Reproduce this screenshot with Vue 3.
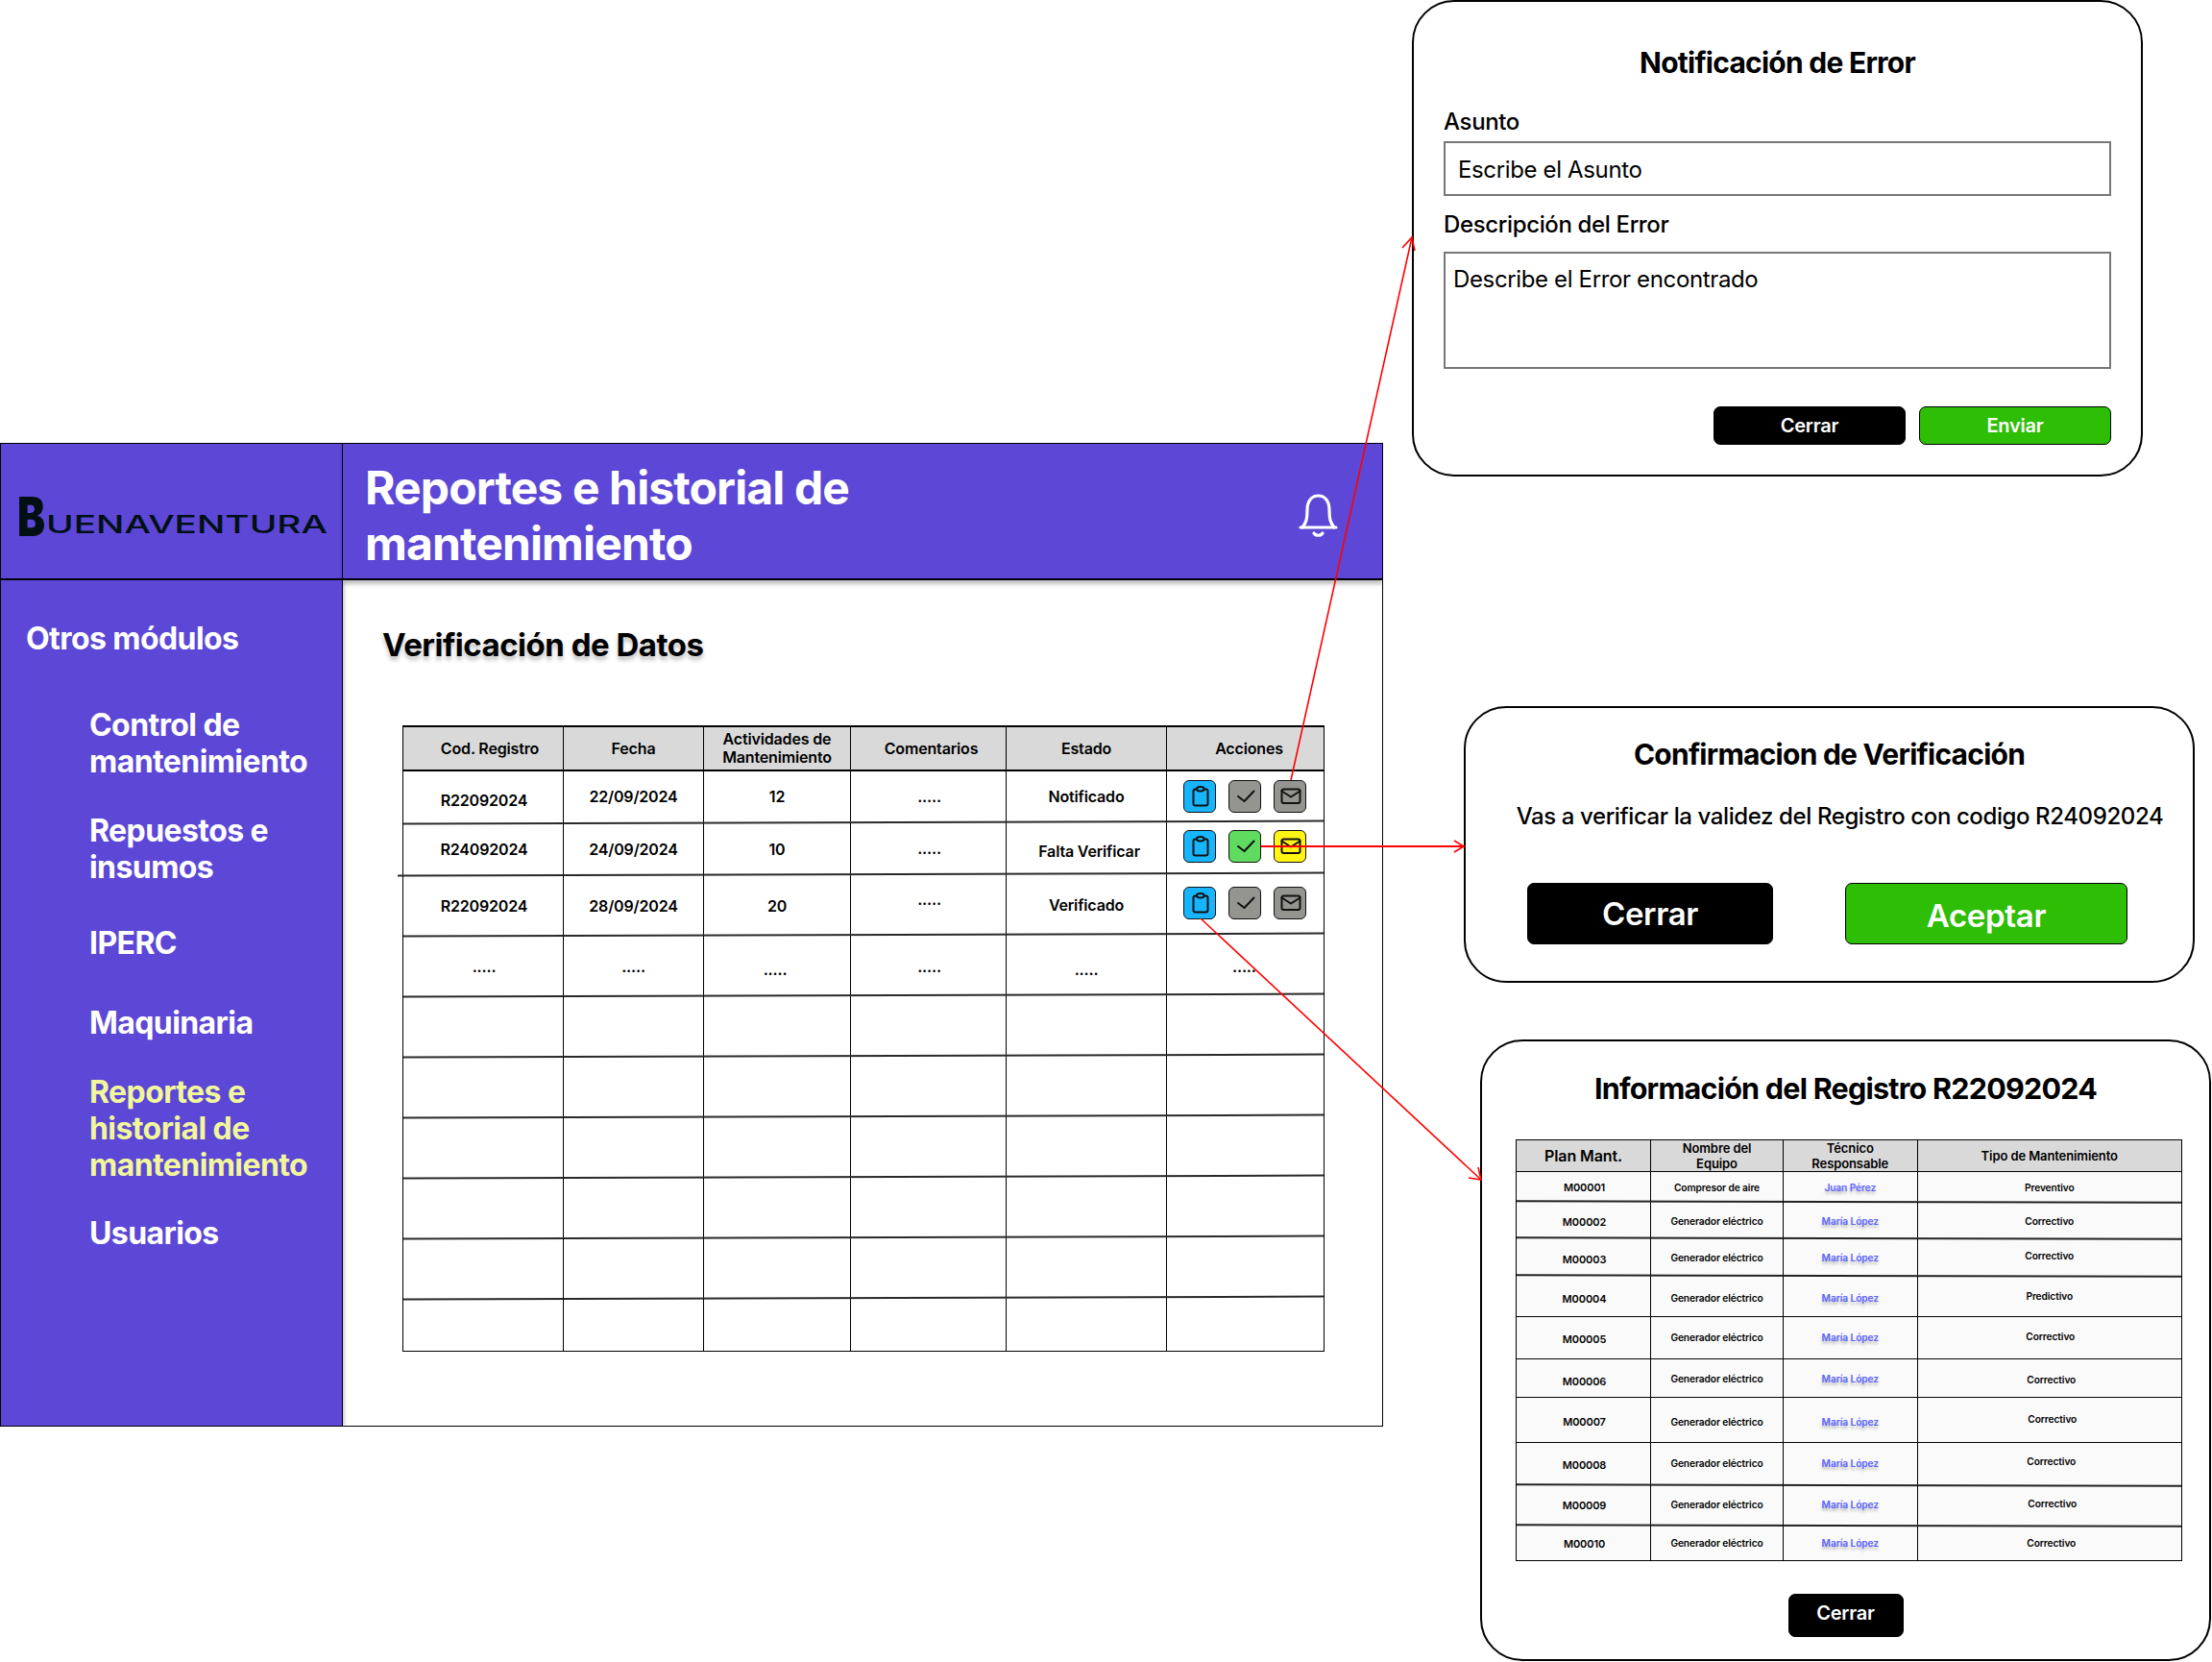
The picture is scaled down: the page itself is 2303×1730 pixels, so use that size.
<template>
  <div class="canvas">
    <section class="frame">
      <div class="logo">
        <svg width="345" height="80" viewBox="0 0 345 80">
          <text x="17" y="66" class="logo-b" textLength="29" lengthAdjust="spacingAndGlyphs">B</text>
          <text x="47" y="63" class="logo-t" textLength="293" lengthAdjust="spacingAndGlyphs">UENAVENTURA</text>
        </svg>
      </div>
      <header class="topbar">
        <h1>Reportes e historial de<br />mantenimiento</h1>
        <svg class="bell" width="42" height="46" viewBox="0 0 42 46" fill="none" stroke="#fff" stroke-width="3.2" stroke-linecap="round" stroke-linejoin="round">
          <path d="M2 35H39" />
          <path d="M4 35C8 30 9 26 9 17C9 7 14 2 20.5 2C27 2 32 7 32 17C32 26 33 30 37 35" />
          <path d="M16 41C18 44 23 44 25 41" />
        </svg>
      </header>

      <nav class="sidebar">
        <div class="side-title">Otros módulos</div>
        <a v-for="item in menu" :key="item.label" class="side-link" :class="{ active: item.active }" :style="{ marginTop: item.gap + 'px' }">{{ item.label }}</a>
      </nav>

      <main class="content">
        <h2>Verificación de Datos</h2>
        <div class="grid-table">
          <div class="row head">
            <div v-for="c in headers" :key="c[0]" class="cell" :style="shift(c[1], c[2])">{{ c[0] }}</div>
          </div>
          <div v-for="(r, i) in rows" :key="i" class="row" :class="{ line: i < rows.length - 1, long: i === 1 }" :style="{ height: r.h + 'px' }">
            <div v-for="(c, j) in r.cells" :key="j" class="cell" :style="shift(c[1], c[2])">{{ c[0] }}</div>
            <div class="cell actions" :style="shift(0, r.btnDy || 0)">
              <template v-if="r.btns">
                <button v-for="b in r.btns" :key="b.kind" class="icon-btn" :class="b.color">
                  <svg width="34" height="34" viewBox="0 0 34 34" fill="none" stroke="#111" stroke-width="2" stroke-linecap="round" stroke-linejoin="round">
                    <template v-if="b.kind === 'clip'">
                      <rect x="10.5" y="9.5" width="15" height="17" rx="2" />
                      <ellipse cx="17.8" cy="9.2" rx="3.8" ry="2.2" fill="#18b5ff" />
                    </template>
                    <path v-else-if="b.kind === 'check'" d="M10 17L16.5 22L26.5 11.5" />
                    <template v-else>
                      <rect x="8.5" y="9.5" width="19" height="14.5" rx="2" />
                      <path d="M8.5 11.5L18 17.5L27.5 11.5" />
                    </template>
                  </svg>
                </button>
              </template>
              <span v-else-if="r.tail" class="tail-dots">.....</span>
            </div>
          </div>
        </div>
      </main>
    </section>

    <section class="modal modal-error">
      <h3>Notificación de Error</h3>
      <label class="field-label first">Asunto</label>
      <div class="input">Escribe el Asunto</div>
      <label class="field-label second">Descripción del Error</label>
      <div class="textarea">Describe el Error encontrado</div>
      <div class="modal-actions">
        <button class="btn black">Cerrar</button>
        <button class="btn green">Enviar</button>
      </div>
    </section>

    <section class="modal modal-confirm">
      <h3>Confirmacion de Verificación</h3>
      <p>Vas a verificar la validez del Registro con codigo R24092024</p>
      <div class="confirm-actions">
        <button class="btn black big close">Cerrar</button>
        <button class="btn green big accept">Aceptar</button>
      </div>
    </section>

    <section class="modal modal-info">
      <h3>Información del Registro R22092024</h3>
      <div class="info-table">
        <div class="info-row info-head">
          <div class="plan">Plan Mant.</div>
          <div>Nombre del<br />Equipo</div>
          <div>Técnico<br />Responsable</div>
          <div>Tipo de Mantenimiento</div>
        </div>
        <div v-for="(r, i) in planRows" :key="r.id" class="info-row" :class="{ slant: i < 3 || i === 7 || i === 8 }" :style="{ height: r.h + 'px' }">
          <div class="code" :style="shift(1, r.dy[0])">{{ r.id }}</div>
          <div :style="shift(0, r.dy[1])">{{ r.equipo }}</div>
          <div class="tech" :style="shift(0, r.dy[2])">{{ r.tecnico }}</div>
          <div :style="shift(r.dx || 0, r.dy[3])">{{ r.tipo }}</div>
        </div>
      </div>
      <button class="btn black info-close">Cerrar</button>
    </section>

    <svg class="links" width="2303" height="1730" viewBox="0 0 2303 1730" fill="none" stroke="#f00" stroke-width="1.6">
      <path d="M1344 812L1470 247" />
      <path d="M1460 258L1470 247L1473 261" />
      <path d="M1313 881H1524" stroke-width="2" />
      <path d="M1514 875L1524 881L1514 887" />
      <path d="M1250 956L1542 1228" />
      <path d="M1529 1226L1542 1228L1539 1215" />
    </svg>
  </div>
</template>

<script setup>
const menu = [
  { label: 'Control de mantenimiento', gap: 52 },
  { label: 'Repuestos e insumos', gap: 35 },
  { label: 'IPERC', gap: 41 },
  { label: 'Maquinaria', gap: 45 },
  { label: 'Reportes e historial de mantenimiento', gap: 35, active: true },
  { label: 'Usuarios', gap: 34 }
]

const headers = [
  ['Cod. Registro', 7, 0],
  ['Fecha', 0, 0],
  ['Actividades de\nMantenimiento', 0, 0],
  ['Comentarios', 3, 0],
  ['Estado', 0, 0],
  ['Acciones', 4, 0]
]

const idle = [
  { kind: 'clip', color: 'blue' },
  { kind: 'check', color: 'gray' },
  { kind: 'mail', color: 'gray' }
]
const pending = [
  { kind: 'clip', color: 'blue' },
  { kind: 'check', color: 'lime' },
  { kind: 'mail', color: 'yellow' }
]

const emptyCells = [['', 0, 0], ['', 0, 0], ['', 0, 0], ['', 0, 0], ['', 0, 0]]
const emptyRow = (h) => ({ h, cells: emptyCells })

const rows = [
  { h: 54, btns: idle, btnDy: -1, cells: [['R22092024', 1, 3], ['22/09/2024', 0, -1], ['12', 0, -1], ['.....', 1, -1], ['Notificado', 0, -1]] },
  { h: 54, btns: pending, btnDy: -3, cells: [['R24092024', 1, 0], ['24/09/2024', 0, 0], ['10', 0, 0], ['.....', 1, -1], ['Falta Verificar', 3, 2]] },
  { h: 63, btns: idle, btnDy: -3, cells: [['R22092024', 1, 0], ['28/09/2024', 0, 0], ['20', 0, 0], ['.....', 1, -7], ['Verificado', 0, -1]] },
  { h: 63, tail: true, cells: [['.....', 1, 0], ['.....', 0, 0], ['.....', -2, 3], ['.....', 1, 0], ['.....', 0, 3]] },
  emptyRow(63),
  emptyRow(63),
  emptyRow(63),
  emptyRow(63),
  emptyRow(63),
  emptyRow(54)
]

const gen = 'Generador eléctrico'
const ml = 'María López'
const planRows = [
  { id: 'M00001', equipo: 'Compresor de aire', tecnico: 'Juan Pérez', tipo: 'Preventivo', h: 31, dy: [1, 1, 1, 1] },
  { id: 'M00002', equipo: gen, tecnico: ml, tipo: 'Correctivo', h: 38, dy: [2, 1, 1, 1] },
  { id: 'M00003', equipo: gen, tecnico: ml, tipo: 'Correctivo', h: 39, dy: [3, 1, 1, -1] },
  { id: 'M00004', equipo: gen, tecnico: ml, tipo: 'Predictivo', h: 43, dy: [3, 2, 2, 0] },
  { id: 'M00005', equipo: gen, tecnico: ml, tipo: 'Correctivo', h: 44, dy: [1, -1, -1, -2], dx: 1 },
  { id: 'M00006', equipo: gen, tecnico: ml, tipo: 'Correctivo', h: 40, dy: [3, 0, 0, 1], dx: 2 },
  { id: 'M00007', equipo: gen, tecnico: ml, tipo: 'Correctivo', h: 47, dy: [2, 2, 2, -1], dx: 3 },
  { id: 'M00008', equipo: gen, tecnico: ml, tipo: 'Correctivo', h: 44, dy: [1, -1, -1, -3], dx: 2 },
  { id: 'M00009', equipo: gen, tecnico: ml, tipo: 'Correctivo', h: 42, dy: [0, -1, -1, -2], dx: 3 },
  { id: 'M00010', equipo: gen, tecnico: ml, tipo: 'Correctivo', h: 36, dy: [1, 0, 0, 0], dx: 2 }
]

// corre el contenido de la celda sin sacarlo del flujo
function shift(dx, dy) {
  return {
    paddingLeft: dx > 0 ? dx * 2 + 'px' : undefined,
    paddingRight: dx < 0 ? -dx * 2 + 'px' : undefined,
    paddingTop: dy > 0 ? dy * 2 + 'px' : undefined,
    paddingBottom: dy < 0 ? -dy * 2 + 'px' : undefined
  }
}
</script>

<style scoped>
.canvas {
  position: relative;
  width: 2303px;
  height: 1730px;
  overflow: hidden;
  background: #fff;
  color: #000;
  font-family: Inter, "Liberation Sans", sans-serif;
}

.frame {
  position: absolute;
  left: 0;
  top: 461px;
  width: 1440px;
  height: 1024px;
  box-sizing: border-box;
  border: 1px solid #000;
  display: grid;
  grid-template-columns: 356px 1fr;
  grid-template-rows: 142px 1fr;
  overflow: hidden;
}

.logo {
  background: #5c47d6;
  border-right: 1px solid #000;
  border-bottom: 2px solid #000;
  display: flex;
  align-items: center;
}

.logo-b {
  font-family: Inter, sans-serif;
  font-size: 56px;
  font-weight: 900;
  fill: #021014;
}

.logo-t {
  font-family: Inter, sans-serif;
  font-size: 25px;
  font-weight: 500;
  fill: #021014;
}

.topbar {
  background: #5c47d6;
  border-bottom: 2px solid #000;
  box-shadow: 0 4px 4px rgba(0, 0, 0, 0.25);
  padding-top: 10px;
  padding-left: 23px;
  padding-right: 45px;
  display: flex;
  align-items: center;
  justify-content: space-between;
  position: relative;
  z-index: 1;
}

.topbar h1 {
  margin: 0;
  color: #fff;
  font-size: 48px;
  line-height: 58px;
  font-weight: 700;
  letter-spacing: -0.018em;
}

.bell {
  margin-top: -1px;
}

.sidebar {
  background: #5c47d6;
  border-right: 1px solid #000;
  box-shadow: 2px 0 3px rgba(0, 0, 0, 0.2);
  padding: 42px 10px 0 26px;
  position: relative;
  z-index: 1;
}

.side-title {
  color: #fff;
  font-size: 32px;
  line-height: 38px;
  font-weight: 700;
  letter-spacing: -0.018em;
}

.side-link {
  display: block;
  color: #fff;
  width: 250px;
  margin-left: 66px;
  font-size: 32px;
  line-height: 37.7px;
  font-weight: 700;
  letter-spacing: -0.018em;
}

.side-link.active {
  color: #f1f79b;
}

.content {
  background: #fff;
  padding-top: 47px;
  padding-left: 41px;
}

.content h2 {
  margin: 0;
  font-size: 33px;
  line-height: 40px;
  font-weight: 700;
  letter-spacing: -0.015em;
  text-shadow: 0 4px 4px rgba(0, 0, 0, 0.25);
}

.grid-table {
  width: 960px;
  margin-top: 64px;
  margin-left: 21px;
  box-sizing: border-box;
  border: 1px solid #000;
  border-top-width: 2px;
  font-size: 16px;
  font-weight: 600;
  letter-spacing: -0.01em;
}

.row {
  display: grid;
  grid-template-columns: 167px 146px 153px 162px 167px 1fr;
  position: relative;
}

.row.head {
  height: 46px;
  box-sizing: border-box;
  background: #d9d9d9;
  border-bottom: 2px solid #000;
  font-size: 16px;
  line-height: 19px;
}

.row.line::after {
  content: "";
  position: absolute;
  left: 0;
  right: 0;
  bottom: 1px;
  height: 1.5px;
  background: #2a2a2a;
  transform: rotate(-0.17deg);
}

.row.long::after {
  left: -6px;
}

.cell {
  display: flex;
  align-items: center;
  justify-content: center;
  box-sizing: border-box;
  border-right: 1px solid #000;
  text-align: center;
  white-space: pre-line;
}

.cell:last-child {
  border-right: 0;
}

.actions {
  justify-content: flex-start;
  gap: 13px;
  padding-left: 17px;
}

.tail-dots {
  margin-left: 51px;
}

.icon-btn {
  width: 34px;
  height: 34px;
  padding: 0;
  box-sizing: border-box;
  border: 1px solid #111;
  border-radius: 6px;
  display: block;
  overflow: hidden;
}

.icon-btn svg {
  display: block;
  margin: -1px;
}

.blue { background: #18b5ff; }
.gray { background: #949490; }
.lime { background: #5fdb5f; }
.yellow { background: #fff515; }

.modal {
  position: absolute;
  box-sizing: border-box;
  border: 2px solid #000;
  border-radius: 44px;
  background: #fff;
}

.modal h3 {
  margin: 0;
  font-size: 30px;
  line-height: 36px;
  font-weight: 700;
  letter-spacing: -0.025em;
  text-align: center;
}

.modal-error {
  left: 1470px;
  top: 0;
  width: 761px;
  height: 496px;
  padding: 45px 31px 0;
}

.field-label {
  display: block;
  font-size: 24px;
  line-height: 28px;
  font-weight: 500;
  letter-spacing: -0.015em;
}

.field-label.first {
  margin-top: 30px;
}

.field-label.second {
  margin-top: 16px;
}

.input,
.textarea {
  box-sizing: border-box;
  border: 2px solid #777;
  font-size: 24px;
  line-height: 28px;
  letter-spacing: -0.015em;
}

.input {
  height: 57px;
  margin-top: 6px;
  padding: 14px 13px;
}

.textarea {
  height: 122px;
  margin-top: 14px;
  padding: 13px 8px;
}

.modal-actions {
  display: flex;
  justify-content: flex-end;
  gap: 14px;
  margin-top: 39px;
}

.btn {
  display: block;
  box-sizing: border-box;
  border: 1px solid #000;
  border-radius: 7px;
  color: #fff;
  font-family: inherit;
  font-weight: 600;
  font-size: 20px;
  letter-spacing: -0.01em;
  padding: 0;
}

.modal-actions .btn {
  width: 200px;
  height: 40px;
}

.black { background: #000; }
.green { background: #2dbe05; }

.modal-confirm {
  left: 1524px;
  top: 735px;
  width: 761px;
  height: 288px;
  padding: 30px 0 0;
}

.modal-confirm p {
  margin: 32px 0 0;
  padding-left: 22px;
  font-size: 24px;
  line-height: 30px;
  font-weight: 500;
  letter-spacing: -0.4px;
  text-align: center;
}

.confirm-actions {
  display: flex;
  gap: 75px;
  margin-top: 54px;
  padding-left: 64px;
}

.btn.big {
  height: 64px;
  font-size: 33px;
}

.close { width: 256px; }
.accept {
  width: 294px;
  padding-top: 4px;
}

.modal-info {
  left: 1541px;
  top: 1082px;
  width: 761px;
  height: 647px;
  padding: 29px 35px 0;
}

.modal-info h3 {
  line-height: 40px;
  font-size: 30.5px;
}

.info-table {
  width: 694px;
  margin-top: 33px;
  box-sizing: border-box;
  border: 1px solid #000;
  background: #fafafa;
  font-size: 10.2px;
  font-weight: 600;
  letter-spacing: -0.01em;
}

.info-row {
  display: grid;
  grid-template-columns: 140px 138px 139.5px 1fr;
  position: relative;
  box-sizing: border-box;
  border-bottom: 1px solid #000;
}

.info-row:last-child {
  border-bottom: 0;
}

.info-row.slant {
  border-bottom-color: transparent;
}

.info-row.slant::after {
  content: "";
  position: absolute;
  left: 0;
  right: 0;
  bottom: -1px;
  height: 1.5px;
  background: #222;
  transform: rotate(0.14deg);
}

.info-row > div {
  display: flex;
  align-items: center;
  justify-content: center;
  box-sizing: border-box;
  border-right: 1px solid #000;
  text-align: center;
}

.info-row > div:last-child {
  border-right: 0;
}

.code {
  font-size: 11px;
}

.info-head {
  height: 33px;
  background: #d9d9d9;
  font-size: 13px;
  line-height: 16px;
}

.info-head .plan {
  font-size: 16px;
}

.tech {
  color: #5b64ff;
  text-shadow: 0 3px 3px rgba(0, 0, 0, 0.25);
}

.info-close {
  width: 120px;
  height: 45px;
  margin: 34px auto 0;
  padding-bottom: 6px;
}

.links {
  position: absolute;
  left: 0;
  top: 0;
  z-index: 5;
  pointer-events: none;
}
</style>

<style>
html,
body {
  margin: 0;
  background: #fff;
}
</style>
